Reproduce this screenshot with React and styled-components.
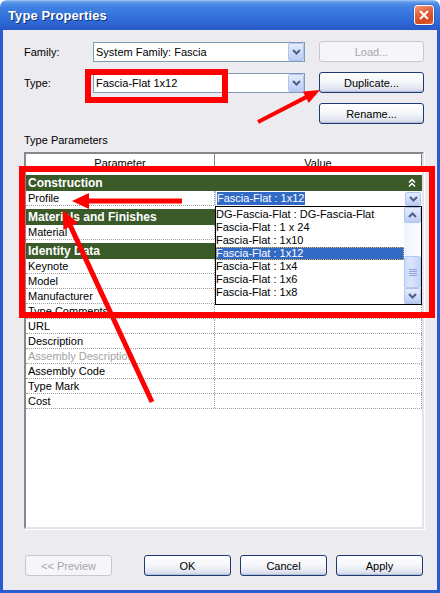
import React from 'react';
import styled, { createGlobalStyle } from 'styled-components';

const Global = createGlobalStyle`
  html, body { margin: 0; padding: 0; background: #ffffff; }
  body { font-family: "Liberation Sans", Arial, sans-serif; font-size: 11px; color: #000; }
  * { box-sizing: border-box; }
`;

const Window = styled.div`
  position: relative;
  width: 440px;
  height: 593px;
  display: flex;
  flex-direction: column;
  overflow: hidden;
  border-radius: 7px 7px 0 0;
`;

const TitleBar = styled.div`
  flex: none;
  height: 30px;
  display: flex;
  align-items: center;
  justify-content: space-between;
  padding: 0 6px 0 8px;
  background: linear-gradient(180deg, #a9c9f5 0px, #5f9aea 2px, #4283e3 6px, #3776dd 14px, #2e68d4 22px, #2858c6 30px);
`;

const Title = styled.div`
  color: #ffffff;
  font-weight: bold;
  font-size: 13px;
  text-shadow: 1px 1px 0 #10307a;
  letter-spacing: 0.1px;
`;

const CloseButton = styled.div`
  width: 20px;
  height: 20px;
  border: 1px solid #ffffff;
  border-radius: 3px;
  display: flex;
  align-items: center;
  justify-content: center;
  background: linear-gradient(160deg, #f39a78 0%, #e4603a 40%, #d3481f 75%, #e06a3c 100%);
  box-shadow: 0 0 0 1px rgba(20, 50, 140, 0.25);
`;

const Body = styled.div`
  flex: 1;
  display: flex;
  flex-direction: column;
  background: #ecebf0;
  border-left: 3px solid #2b5bd0;
  border-right: 3px solid #2b5bd0;
  border-bottom: 3px solid #2b5bd0;
  padding: 11px 0 0 21px;
`;

const FormGrid = styled.div`
  display: grid;
  grid-template-columns: 55px 212px 105px;
  grid-template-rows: 21px 21px 21px;
  column-gap: 14px;
  row-gap: 10px;
  align-items: center;
`;

const Label = styled.div`
  font-size: 11px;
  color: #000;
`;

const Combo = styled.div`
  height: 20px;
  border: 1px solid #7f9db9;
  background: #ffffff;
  display: flex;
  align-items: center;
  padding-left: 2px;
`;

const ComboText = styled.div`
  flex: 1;
  white-space: nowrap;
  overflow: hidden;
`;

const XpArrowBox = styled.div`
  flex: none;
  width: ${(p) => p.$w || 16}px;
  height: ${(p) => p.$h || 18}px;
  border: 1px solid #b2c4ee;
  border-radius: 2px;
  background: linear-gradient(180deg, #e4ecfd 0%, #cfdcfa 55%, #b9cbf4 100%);
  display: flex;
  align-items: center;
  justify-content: center;
`;

const XpButton = styled.button`
  width: ${(p) => p.$w || 105}px;
  height: 21px;
  margin-left: ${(p) => p.$ml || 0}px;
  padding: 0;
  font-family: inherit;
  font-size: 11px;
  color: #000;
  border: 1px solid #1d3b72;
  border-radius: 3px;
  background: linear-gradient(180deg, #ffffff 0%, #f6f7fa 45%, #e3e7f0 80%, #c9d1e3 100%);
  box-shadow: inset 0 -1px 0 #b7c0d6;
  display: flex;
  align-items: center;
  justify-content: center;
  &:disabled {
    color: #aca899;
    color: #a7a6ad;
    border-color: #c9c7ce;
    background: #f6f5f8;
    box-shadow: none;
  }
`;

const SectionLabel = styled.div`
  margin-top: 10px;
  line-height: 13px;
  height: 13px;
`;

const Table = styled.div`
  position: relative;
  margin-top: 5px;
  width: 400px;
  height: 377px;
  background: #ffffff;
  border-style: solid;
  border-width: 2px;
  border-color: #888888 #e4e3e8 #e4e3e8 #888888;
  box-shadow: 1px 1px 0 #ffffff;
`;

const HeaderRow = styled.div`
  display: grid;
  grid-template-columns: 189px 207px;
  height: 18px;
  border-bottom: 1px solid #a0a0a0;
`;

const HeaderCell = styled.div`
  border-right: 1px solid #808080;
  display: flex;
  align-items: center;
  justify-content: center;
  padding-left: ${(p) => p.$pl || 0}px;
`;

const GroupRow = styled.div`
  margin-top: 3px;
  height: 16px;
  background: #3a5a2a;
  color: #ffffff;
  font-weight: bold;
  font-size: 12px;
  display: flex;
  align-items: center;
  justify-content: space-between;
  padding: 0 6px 0 2px;
`;

const ParamRow = styled.div`
  display: grid;
  grid-template-columns: 189px 207px;
  height: 15px;
  border-bottom: 1px dotted #a0a0a0;
`;

const NameCell = styled.div`
  border-right: 1px dotted #a0a0a0;
  padding-left: 2px;
  line-height: 14px;
  color: ${(p) => (p.$muted ? '#a3a3a3' : '#000000')};
  white-space: nowrap;
`;

const ValueCell = styled.div`
  border-right: 1px dotted #a0a0a0;
`;

const Popup = styled.div`
  position: absolute;
  left: 189px;
  top: 37px;
  width: 207px;
  z-index: 2;
`;

const EditBox = styled.div`
  height: 15px;
  background: #ffffff;
  display: flex;
  align-items: center;
  justify-content: space-between;
  padding: 0 1px 0 1px;
  border-left: 1px solid #d0d0d0;
`;

const Highlight = styled.span`
  background: #316ac5;
  color: #ffffff;
  line-height: 13px;
  padding: 0 1px 0 0;
`;

const List = styled.div`
  height: 99px;
  border: 1px solid #000000;
  background: #ffffff;
  display: flex;
`;

const Items = styled.div`
  flex: 1;
  padding-top: 1px;
`;

const Item = styled.div`
  height: 13px;
  line-height: 12px;
  padding-left: 0px;
  white-space: nowrap;
  background: ${(p) => (p.$sel ? '#316ac5' : 'transparent')};
  color: ${(p) => (p.$sel ? '#ffffff' : '#000000')};
  outline: ${(p) => (p.$sel ? '1px dotted #e8b048' : 'none')};
  outline-offset: -1px;
`;

const Scrollbar = styled.div`
  width: 17px;
  display: flex;
  flex-direction: column;
  background: linear-gradient(90deg, #eef3fc 0%, #fbfcff 100%);
`;

const Track = styled.div`
  height: ${(p) => p.$h}px;
`;

const Thumb = styled.div`
  height: 32px;
  border: 1px solid #b4c6f2;
  border-radius: 2px;
  background: linear-gradient(90deg, #cfdcfb 0%, #dbe5fc 40%, #c3d4fa 100%);
  display: flex;
  align-items: center;
  justify-content: center;
`;

const Footer = styled.div`
  margin-top: 26px;
  display: flex;
  gap: 9px;
`;

const Chevron = ({ up, color = '#4d6185' }) => (
  <svg width="9" height="6" viewBox="0 0 9 6">
    <path d={up ? 'M1 5 L4.5 1.5 L8 5' : 'M1 1 L4.5 4.5 L8 1'} fill="none" stroke={color} strokeWidth="2" />
  </svg>
);

const DoubleUp = () => (
  <svg width="8" height="10" viewBox="0 0 8 10">
    <path d="M1 4.5 L4 1.5 L7 4.5 M1 8.5 L4 5.5 L7 8.5" fill="none" stroke="#ffffff" strokeWidth="1.5" />
  </svg>
);

const Grip = () => (
  <svg width="8" height="8" viewBox="0 0 8 8">
    <path d="M0 1.5 H8 M0 3.5 H8 M0 5.5 H8 M0 7.5 H8" stroke="#8ea4d6" strokeWidth="1" />
  </svg>
);

function arrow(x1, y1, x2, y2, lw, hl, hw) {
  const dx = x2 - x1;
  const dy = y2 - y1;
  const L = Math.hypot(dx, dy);
  const ux = dx / L;
  const uy = dy / L;
  const px = -uy;
  const py = ux;
  const bx = x2 - ux * hl;
  const by = y2 - uy * hl;
  return {
    line: { x1, y1, x2: bx + ux, y2: by + uy, lw },
    head: `${x2},${y2} ${bx + (px * hw) / 2},${by + (py * hw) / 2} ${bx - (px * hw) / 2},${by - (py * hw) / 2}`,
  };
}

const Overlay = styled.svg`
  position: absolute;
  left: 0;
  top: 0;
  pointer-events: none;
  z-index: 10;
`;

const Annotations = () => {
  const arrows = [
    arrow(258, 122, 320, 90, 4, 16, 13),
    arrow(182, 201, 72, 201, 5, 17, 16),
    arrow(152, 402, 63, 210, 5, 18, 16),
  ];
  return (
    <Overlay width="440" height="593" viewBox="0 0 440 593">
      <rect x="88" y="72" width="137" height="28" fill="none" stroke="#ff0000" strokeWidth="6" />
      <rect x="22" y="169" width="410" height="146" fill="none" stroke="#ff0000" strokeWidth="6" />
      {arrows.map((a, i) => (
        <g key={i}>
          <line x1={a.line.x1} y1={a.line.y1} x2={a.line.x2} y2={a.line.y2} stroke="#ff0000" strokeWidth={a.line.lw} />
          <polygon points={a.head} fill="#ff0000" />
        </g>
      ))}
    </Overlay>
  );
};

const groups = [
  { name: 'Construction', icon: true, params: [{ n: 'Profile' }] },
  { name: 'Materials and Finishes', params: [{ n: 'Material' }] },
  {
    name: 'Identity Data',
    params: [
      { n: 'Keynote' },
      { n: 'Model' },
      { n: 'Manufacturer' },
      { n: 'Type Comments' },
      { n: 'URL' },
      { n: 'Description' },
      { n: 'Assembly Description', muted: true },
      { n: 'Assembly Code' },
      { n: 'Type Mark' },
      { n: 'Cost' },
    ],
  },
];

const options = [
  'DG-Fascia-Flat : DG-Fascia-Flat',
  'Fascia-Flat : 1 x 24',
  'Fascia-Flat : 1x10',
  'Fascia-Flat : 1x12',
  'Fascia-Flat : 1x4',
  'Fascia-Flat : 1x6',
  'Fascia-Flat : 1x8',
];

export default function App() {
  return (
    <>
      <Global />
      <Window>
        <TitleBar>
          <Title>Type Properties</Title>
          <CloseButton>
            <svg width="10" height="10" viewBox="0 0 10 10">
              <path d="M1 1 L9 9 M9 1 L1 9" stroke="#ffffff" strokeWidth="2" />
            </svg>
          </CloseButton>
        </TitleBar>
        <Body>
          <FormGrid>
            <Label>Family:</Label>
            <Combo>
              <ComboText>System Family: Fascia</ComboText>
              <XpArrowBox>
                <Chevron />
              </XpArrowBox>
            </Combo>
            <XpButton disabled>Load...</XpButton>

            <Label>Type:</Label>
            <Combo>
              <ComboText>Fascia-Flat 1x12</ComboText>
              <XpArrowBox>
                <Chevron />
              </XpArrowBox>
            </Combo>
            <XpButton>Duplicate...</XpButton>

            <span />
            <span />
            <XpButton>Rename...</XpButton>
          </FormGrid>

          <SectionLabel>Type Parameters</SectionLabel>

          <Table>
            <HeaderRow>
              <HeaderCell>Parameter</HeaderCell>
              <HeaderCell $pl={0}>Value</HeaderCell>
            </HeaderRow>
            {groups.map((g) => (
              <React.Fragment key={g.name}>
                <GroupRow>
                  <span>{g.name}</span>
                  {g.icon && <DoubleUp />}
                </GroupRow>
                {g.params.map((p) => (
                  <ParamRow key={p.n}>
                    <NameCell $muted={p.muted}>{p.n}</NameCell>
                    <ValueCell />
                  </ParamRow>
                ))}
              </React.Fragment>
            ))}

            <Popup>
              <EditBox>
                <Highlight>Fascia-Flat : 1x12</Highlight>
                <XpArrowBox $w={16} $h={14}>
                  <Chevron />
                </XpArrowBox>
              </EditBox>
              <List>
                <Items>
                  {options.map((o, i) => (
                    <Item key={o} $sel={i === 3}>
                      {o}
                    </Item>
                  ))}
                </Items>
                <Scrollbar>
                  <XpArrowBox $w={17} $h={16}>
                    <Chevron up />
                  </XpArrowBox>
                  <Track $h={33} />
                  <Thumb>
                    <Grip />
                  </Thumb>
                  <XpArrowBox $w={17} $h={16}>
                    <Chevron />
                  </XpArrowBox>
                </Scrollbar>
              </List>
            </Popup>
          </Table>

          <Footer>
            <XpButton disabled $w={87} $ml={1}>
              &lt;&lt; Preview
            </XpButton>
            <XpButton $w={87} $ml={23}>
              OK
            </XpButton>
            <XpButton $w={87}>Cancel</XpButton>
            <XpButton $w={87}>Apply</XpButton>
          </Footer>
        </Body>
        <Annotations />
      </Window>
    </>
  );
}
